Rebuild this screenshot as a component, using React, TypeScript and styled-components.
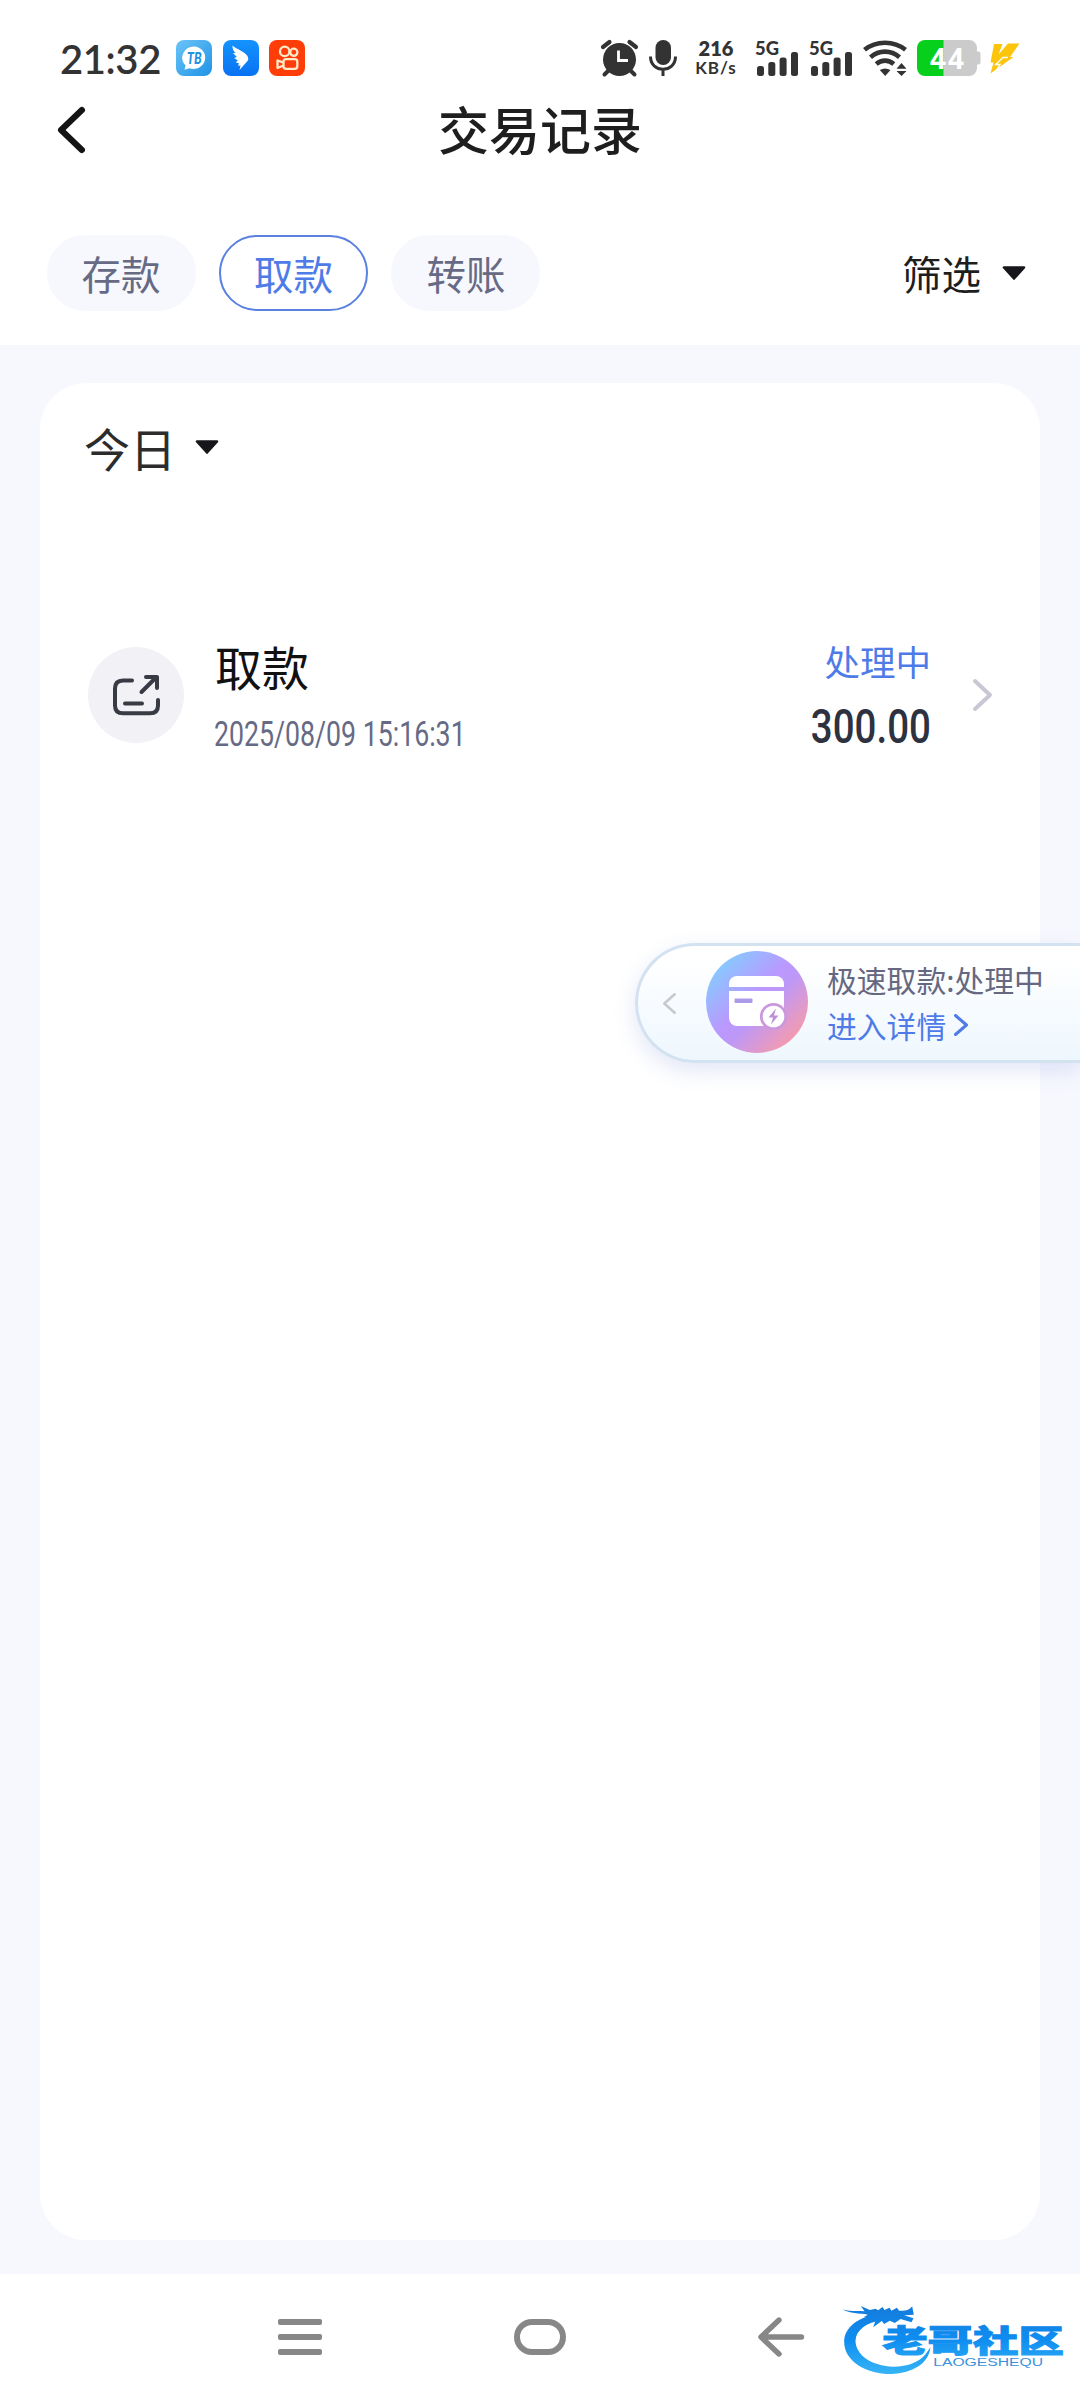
import React from "react";
import styled, { createGlobalStyle } from "styled-components";

const CJK = `"Noto Sans CJK SC", sans-serif`;
const INK = "#333333";
const BLUE = "#4f7be8";

const GlobalStyle = createGlobalStyle`
  * { box-sizing: border-box; }
  body { margin: 0; background: #fff; font-family: ${CJK}; }
  svg { display: block; flex: none; overflow: visible; }
`;

const Screen = styled.div`
  position: relative;
  width: 1080px;
  height: 2400px;
  display: flex;
  flex-direction: column;
  overflow: hidden;
  background: #fff;
`;

/* ---------- status bar ---------- */
const StatusBar = styled.div`
  flex: none;
  height: 76px;
  padding: 40px 60px 0 60px;
  display: flex;
  justify-content: space-between;
`;
const StatusGroup = styled.div`
  display: flex;
  align-items: center;
  height: 36px;
`;
const Clock = styled.span`
  width: 115.5px;
  padding-top: 1px;
  font: 600 40px/36px Lato, sans-serif;
  letter-spacing: -0.4px;
  white-space: nowrap;
  color: ${INK};
`;
const Slot = styled.div<{ $before: number }>`
  margin-left: ${(p) => p.$before}px;
`;
const Speed = styled.div`
  width: 42px;
  display: flex;
  flex-direction: column;
  align-items: center;
  color: ${INK};
  white-space: nowrap;
`;
const SpeedValue = styled.span`
  font: 800 20px/20px Lato, sans-serif;
`;
const SpeedUnit = styled.span`
  font: 700 17px/20px Lato, sans-serif;
  letter-spacing: 1px;
`;

/* ---------- header ---------- */
const Header = styled.header`
  flex: none;
  height: 104px;
  padding: 0 58px;
  display: grid;
  grid-template-columns: 60px 1fr 60px;
  align-items: center;
`;
const BackButton = styled.div`
  padding-top: 3px;
`;
const Title = styled.h1`
  margin: 0;
  text-align: center;
  font: 500 51px/70px ${CJK};
  color: #1e1e1e;
`;
const FilterBar = styled.div`
  flex: none;
  height: 165px;
  padding: 55px 54px 34px 46.600px;
  display: flex;
  justify-content: space-between;
  align-items: center;
`;
const Tabs = styled.div`
  display: flex;
  gap: 23.4px;
`;
const Tab = styled.button<{ $active?: boolean }>`
  width: 149px;
  height: 76px;
  padding: 0;
  border: 2px solid ${(p) => (p.$active ? "#5a80e0" : "#f7f8fd")};
  border-radius: 38px;
  background: ${(p) => (p.$active ? "#fff" : "#f7f8fd")};
  font: 400 39.5px/70px ${CJK};
  color: ${(p) => (p.$active ? BLUE : "#666a85")};
`;
const FilterButton = styled.div`
  display: flex;
  align-items: center;
  gap: 21px;
  font: 400 39.5px/60px ${CJK};
  color: #1e1e1e;
`;

/* ---------- list ---------- */
const Main = styled.main`
  flex: 1;
  padding: 38px 40px 34px;
  background: #f7f8fe;
  display: flex;
`;
const Card = styled.section`
  flex: 1;
  padding: 34px 48px 0 44px;
  border-radius: 46px;
  background: #fff;
`;
const DayPicker = styled.div`
  display: flex;
  align-items: center;
  gap: 19px;
  font: 400 46px/60px ${CJK};
  color: #2c2c2c;
`;
const Record = styled.div`
  margin-top: 159px;
  padding-left: 4px;
  height: 117px;
  display: flex;
  align-items: center;
`;
const IconDisc = styled.div`
  flex: none;
  width: 96px;
  height: 96px;
  border-radius: 50%;
  background: #f1f1f6;
  display: flex;
  align-items: center;
  justify-content: center;
`;
const RecordInfo = styled.div`
  flex: 1;
  padding-left: 30px;
  display: flex;
  flex-direction: column;
  gap: 17px;
`;
const RecordName = styled.div`
  padding-left: 1px;
  font: 400 47px/62px ${CJK};
  color: #111;
`;
const Narrow = styled.div<{ $scale: number; $right?: boolean }>`
  white-space: nowrap;
  transform: scaleX(${(p) => p.$scale});
  transform-origin: ${(p) => (p.$right ? "right" : "left")} center;
`;
const RecordTime = styled(Narrow)`
  font: 400 35.5px/40px Roboto, sans-serif;
  color: #666a85;
`;
const RecordState = styled.div`
  align-self: flex-start;
  padding-top: 3px;
  display: flex;
  flex-direction: column;
  align-items: flex-end;
  gap: 16px;
`;
const StateText = styled.div`
  font: 400 35.5px/44px ${CJK};
  color: ${BLUE};
`;
const Amount = styled(Narrow)`
  font: 500 49px/56px Roboto, sans-serif;
  color: #2e3140;
`;
const RowChevron = styled.div`
  margin-left: 42px;
`;

/* ---------- floating notice ---------- */
const Notice = styled.aside`
  position: absolute;
  top: 943px;
  right: 0;
  width: 445px;
  height: 120px;
  padding-left: 25px;
  display: flex;
  align-items: center;
  border: 3px solid #d3e2f0;
  border-right: 0;
  border-radius: 60px 0 0 60px;
  background: linear-gradient(#ffffff 10%, #eef7fe);
  box-shadow: 0 8px 22px rgba(110, 135, 215, 0.2);
`;
const NoticeIcon = styled.div`
  width: 102px;
  height: 102px;
  margin: -2px 19px 0 30px;
  border-radius: 50%;
  background: linear-gradient(135deg, #7fd0ff 8%, #bb98ff 46%, #bd98f8 56%, #ff9ba0 92%);
  display: flex;
  align-items: center;
  justify-content: center;
`;
const NoticeText = styled.div`
  margin-top: -3px;
  display: flex;
  flex-direction: column;
  gap: 6px;
  font: 400 29.8px/40px ${CJK};
  white-space: nowrap;
  color: #666780;
`;
const NoticeLink = styled.div`
  display: flex;
  align-items: center;
  gap: 8px;
  color: ${BLUE};
`;

/* ---------- system navigation ---------- */
const NavBar = styled.nav`
  flex: none;
  height: 126px;
  padding: 0 276px 0 278px;
  display: flex;
  align-items: center;
  justify-content: space-between;
`;
const Watermark = styled.div`
  position: absolute;
  left: 840px;
  top: 2297px;
`;

const Caret = () => (
  <svg width="24" height="14" viewBox="0 0 24 14">
    <path d="M2 1.5H22L12 12.5Z" fill="#17171b" stroke="#17171b" strokeWidth="2.6" strokeLinejoin="round" />
  </svg>
);

const Chevron = ({ w, h, color, stroke, left }: { w: number; h: number; color: string; stroke: number; left?: boolean }) => {
  const a = stroke / 2;
  const tip = left ? a : w - a;
  const end = left ? w - a : a;
  return (
    <svg width={w} height={h} viewBox={`0 0 ${w} ${h}`}>
      <path d={`M${end} ${a}L${tip} ${h / 2}L${end} ${h - a}`} fill="none" stroke={color} strokeWidth={stroke} strokeLinecap="round" strokeLinejoin="round" />
    </svg>
  );
};

const AppIcons = () => (
  <>
    <svg width="36" height="36" viewBox="0 0 36 36">
      <defs>
        <linearGradient id="tb" x1="0" y1="0" x2="1" y2="1">
          <stop offset="0" stopColor="#6cc4f8" />
          <stop offset="1" stopColor="#1f93e6" />
        </linearGradient>
      </defs>
      <rect width="36" height="36" rx="8" fill="url(#tb)" />
      <path d="M18 6.5a11.7 11.2 0 1 1-4.5 21.7L8.5 29.7 9.6 25.5A11.7 11.2 0 0 1 18 6.5Z" fill="#fff" />
      <text x="11" y="23.6" fontFamily="Lato, sans-serif" fontWeight="900" fontStyle="italic" fontSize="17" textLength="14.5" lengthAdjust="spacingAndGlyphs" fill="#2191e2">TB</text>
    </svg>
    <Slot $before={11}>
      <svg width="36" height="36" viewBox="0 0 36 36">
        <defs>
          <linearGradient id="wing" x1="0" y1="0" x2="0" y2="1">
            <stop offset="0" stopColor="#1493ff" />
            <stop offset="1" stopColor="#0872f2" />
          </linearGradient>
        </defs>
        <rect width="36" height="36" rx="8" fill="url(#wing)" />
        <path d="M9.5 5.5C13 9 21 11 24.5 16Q26 18.5 24.5 21L16.5 30 17.6 25.6 15 25.8 16 23.2 12.8 22.4 14.8 20.4 11.2 18 13.8 17 10 13 12.6 13C10.5 11 9.3 8.5 9.5 5.5Z" fill="#fff" />
      </svg>
    </Slot>
    <Slot $before={10.5}>
      <svg width="36" height="36" viewBox="0 0 36 36">
        <rect width="36" height="36" rx="8" fill="#ff3d08" />
        <g fill="none" stroke="#ffe9c9" strokeWidth="2.3" strokeLinejoin="round">
          <circle cx="15.7" cy="11.4" r="4.7" />
          <circle cx="24.8" cy="12.3" r="3.6" />
          <rect x="14.5" y="19.2" width="13.8" height="9.6" rx="2.6" />
          <path d="M14 22.4L8.5 20.5V28L14 25.8" />
        </g>
      </svg>
    </Slot>
  </>
);

const Signal = () => (
  <svg width="44" height="36" viewBox="0 0 44 36" fill={INK}>
    <text x="0" y="14.8" fontFamily="Lato, sans-serif" fontWeight="900" fontSize="19" textLength="24" lengthAdjust="spacingAndGlyphs">5G</text>
    <rect x="2" y="26" width="7" height="10" rx="2.5" />
    <rect x="13.3" y="22" width="7" height="14" rx="2.5" />
    <rect x="24.6" y="17.5" width="7" height="18.5" rx="2.5" />
    <rect x="36" y="12" width="7" height="24" rx="2.5" />
  </svg>
);

const StatusIcons = () => (
  <>
    <svg width="37" height="36" viewBox="0 0 37 36" stroke={INK} fill="none">
      <circle cx="18.5" cy="19.5" r="16.5" fill={INK} stroke="none" />
      <path d="M2 7L8.5 2M35 7L28.5 2" strokeWidth="4.2" strokeLinecap="round" />
      <path d="M7 31L3.5 34.5M30 31L33.5 34.5" strokeWidth="4" strokeLinecap="round" />
      <path d="M17.5 10.5V20.5H27" stroke="#fff" strokeWidth="2.8" />
    </svg>
    <Slot $before={11}>
      <svg width="28" height="36" viewBox="0 0 28 36">
        <rect x="6.5" y="0" width="15.5" height="25" rx="7.7" fill={INK} />
        <path d="M1.5 16.5C1.5 33.5 26.5 33.5 26.5 16.5M14 30V36" fill="none" stroke={INK} strokeWidth="3" />
      </svg>
    </Slot>
    <Slot $before={18}>
      <Speed>
        <SpeedValue>216</SpeedValue>
        <SpeedUnit>KB/s</SpeedUnit>
      </Speed>
    </Slot>
    <Slot $before={18}><Signal /></Slot>
    <Slot $before={10}><Signal /></Slot>
    <Slot $before={10}>
      <svg width="44" height="36" viewBox="0 0 44 36">
        <g fill="none" stroke={INK} strokeWidth="4.6">
          <path d="M1.5 9.8C13 0.3 31 0.3 42.5 9.8" />
          <path d="M7.5 17.2C16 9.8 28 9.8 36.5 17.2" />
          <path d="M13.2 24C18.5 19.5 25.5 19.5 30.8 24" />
        </g>
        <path d="M16.8 30Q22 27 27.5 30L22.2 36Z" fill={INK} />
        <path d="M33.5 28.8L38.5 23 43.5 28.8ZM33.5 31L38.5 36 43.5 31Z" fill={INK} />
      </svg>
    </Slot>
    <Slot $before={10}>
      <svg width="64" height="36" viewBox="0 0 64 36">
        <path d="M26 0H52A8 8 0 0 1 60 8V11.5H61.5A2 2 0 0 1 63.5 13.5V22.5A2 2 0 0 1 61.5 24.5H60V28A8 8 0 0 1 52 36H26Z" fill="#cbcbcb" />
        <path d="M26.5 0H8A8 8 0 0 0 0 8V28A8 8 0 0 0 8 36H26.5Z" fill="#06d01c" />
        <text x="13" y="28.5" fontFamily="'Open Sans', sans-serif" fontWeight="700" fontSize="28" textLength="34" lengthAdjust="spacing" fill="#fff">44</text>
      </svg>
    </Slot>
    <Slot $before={9}>
      <svg width="30" height="36" viewBox="0 0 30 36">
        <path d="M4 4H12.5L8.5 14.5L18 3.5H29.5L20 17H23.5L0.5 33.5L3.5 22.5H0.5Z" fill="#fdc40c" />
        <path d="M13 17.5L5.5 24.5H10L6.5 30M12.5 17.5H18" stroke="#fff" strokeWidth="1.3" fill="none" />
      </svg>
    </Slot>
  </>
);

const TransferIcon = () => (
  <svg width="48" height="42" viewBox="0 0 48 42" fill="none" stroke="#383a44" strokeWidth="4" strokeLinecap="round" strokeLinejoin="round">
    <path d="M20 6.5H11Q3 6.5 3 14.5V31.5Q3 39.3 11 39.3H38Q46 39.3 46 31.5V26" />
    <path d="M13 29.5H30M29.5 18L44 3.5M34 3H45V14" />
  </svg>
);

const CardIcon = () => (
  <svg width="58" height="54" viewBox="0 0 58 54">
    <path d="M1 12V9A8 8 0 0 1 9 1H48A8 8 0 0 1 56 9V12Z" fill="#fff" />
    <path d="M1 16H56V43A8 8 0 0 1 48 51H9A8 8 0 0 1 1 43Z" fill="#fff" />
    <rect x="6.5" y="23.5" width="18" height="4.5" rx="1" fill="#ad9bea" />
    <circle cx="45.5" cy="41.5" r="12.2" fill="#fff" stroke="#cb98dd" strokeWidth="2.8" />
    <path d="M48 33.5L40.5 42.5H45L43 49.5L50.5 40.5H46Z" fill="#bd90d6" />
  </svg>
);

const Logo = () => (
  <svg width="227" height="80" viewBox="420 290 680 240">
    <defs>
      <linearGradient id="logo" x1="0" y1="315" x2="0" y2="520" gradientUnits="userSpaceOnUse">
        <stop offset="0" stopColor="#147bdc" />
        <stop offset="0.5" stopColor="#0e8df0" />
        <stop offset="1" stopColor="#35b4f6" />
      </linearGradient>
    </defs>
    <g fill="url(#logo)">
      <path d="M540 343C475 345 432 382 432 424C432 482 497 521 573 521C640 519 686 488 691 441L676 462C655 487 622 499 580 499C513 497 466 463 466 421C468 390 497 366 548 360Z" />
      <path d="M427 327C448 335 470 331 493 333L482 317L509 329L526 325L534 330L547 320L553 329L568 322L574 331L590 322L597 331C614 333 628 330 636 318L641 343L612 345L640 354L634 366L601 356L584 368L569 361L552 371L545 362L519 381L526 361L500 366L513 351L490 351L503 343C476 338 449 341 427 327Z" />
      <text x="546" y="456" fontFamily="'Noto Sans CJK SC', sans-serif" fontWeight="900" fontSize="92" textLength="545" lengthAdjust="spacingAndGlyphs" stroke="url(#logo)" strokeWidth="3">老哥社区</text>
    </g>
    <text x="699" y="498" fontFamily="'Liberation Sans', sans-serif" fontSize="30" textLength="330" lengthAdjust="spacingAndGlyphs" fill="#3a92dc">LAOGESHEQU</text>
  </svg>
);

export default function App() {
  return (
    <>
      <GlobalStyle />
      <Screen>
        <StatusBar>
          <StatusGroup>
            <Clock>21:32</Clock>
            <AppIcons />
          </StatusGroup>
          <StatusGroup>
            <StatusIcons />
          </StatusGroup>
        </StatusBar>
        <Header>
          <BackButton>
            <Chevron w={27} h={46} color="#141414" stroke={6.2} left />
          </BackButton>
          <Title>交易记录</Title>
        </Header>
        <FilterBar>
          <Tabs>
            <Tab>存款</Tab>
            <Tab $active>取款</Tab>
            <Tab>转账</Tab>
          </Tabs>
          <FilterButton>
            筛选
            <Caret />
          </FilterButton>
        </FilterBar>
        <Main>
          <Card>
            <DayPicker>
              今日
              <Caret />
            </DayPicker>
            <Record>
              <IconDisc><TransferIcon /></IconDisc>
              <RecordInfo>
                <RecordName>取款</RecordName>
                <RecordTime $scale={0.752}>2025/08/09 15:16:31</RecordTime>
              </RecordInfo>
              <RecordState>
                <StateText>处理中</StateText>
                <Amount $scale={0.785} $right>300.00</Amount>
              </RecordState>
              <RowChevron>
                <Chevron w={19} h={32} color="#c8c8d4" stroke={4} />
              </RowChevron>
            </Record>
          </Card>
        </Main>
        <NavBar>
          <svg width="44" height="36" viewBox="0 0 44 36" fill="#878787">
            <rect width="44" height="6" rx="2" />
            <rect y="15" width="44" height="6" rx="2" />
            <rect y="30" width="44" height="6" rx="2" />
          </svg>
          <svg width="52" height="36" viewBox="0 0 52 36">
            <rect x="3" y="3" width="46" height="30" rx="15" fill="none" stroke="#878787" strokeWidth="6" />
          </svg>
          <svg width="46" height="40" viewBox="0 0 46 40">
            <path d="M21 3L3 20L21 37M4 20H43.5" fill="none" stroke="#878787" strokeWidth="5.4" strokeLinecap="round" strokeLinejoin="round" />
          </svg>
        </NavBar>
        <Notice>
          <Chevron w={13} h={21} color="#c6c9cf" stroke={2.6} left />
          <NoticeIcon><CardIcon /></NoticeIcon>
          <NoticeText>
            <div>极速取款:处理中</div>
            <NoticeLink>
              进入详情
              <Chevron w={14} h={22} color={BLUE} stroke={3} />
            </NoticeLink>
          </NoticeText>
        </Notice>
        <Watermark><Logo /></Watermark>
      </Screen>
    </>
  );
}
